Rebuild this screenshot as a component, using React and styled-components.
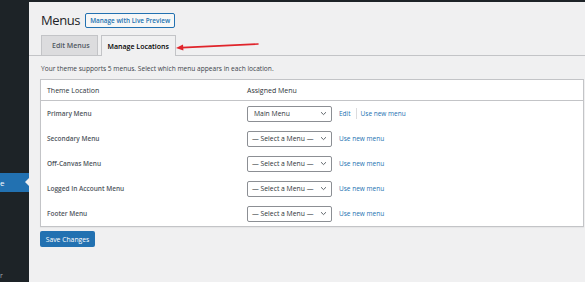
import React from 'react';
import styled, { createGlobalStyle } from 'styled-components';

const GlobalStyle = createGlobalStyle`
  html, body {
    margin: 0;
    padding: 0;
    width: 585px;
    height: 282px;
    overflow: hidden;
    background: #f0f0f1;
    font-family: "Open Sans", "Noto Sans", sans-serif;
    color: #3c434a;
  }
`;

const Page = styled.div`
  position: relative;
  width: 585px;
  height: 282px;
  display: flex;
  flex-direction: column;
`;

const AdminBar = styled.div`
  height: 2px;
  background: #1d2327;
`;

const Body = styled.div`
  flex: 1;
  display: flex;
`;

const Sidebar = styled.div`
  width: 29px;
  background: #1d2327;
  display: flex;
  flex-direction: column;
  padding-top: 171px;
  box-sizing: border-box;
`;

const SideItem = styled.div`
  position: relative;
  height: 19px;
  background: #2271b1;
  color: #fff;
  font-size: 8px;
  line-height: 19px;
  overflow: hidden;
  &::after {
    content: '';
    position: absolute;
    right: 0;
    top: 5px;
    border: 4.5px solid transparent;
    border-right-color: #f0f0f1;
  }
`;

const SideFoot = styled.div`
  margin-top: auto;
  color: #a7aaad;
  font-size: 7px;
  line-height: 10px;
  padding-bottom: 1px;
`;

const Content = styled.div`
  flex: 1;
  padding: 9px 1px 0 12px;
  display: flex;
  flex-direction: column;
`;

const TitleRow = styled.div`
  display: flex;
  align-items: center;
  gap: 5px;
  height: 18px;
`;

const Title = styled.h1`
  margin: 0;
  font-size: 13px;
  font-weight: 400;
  letter-spacing: -0.4px;
  color: #1d2327;
  line-height: 18px;
`;

const OutlineButton = styled.span`
  display: inline-flex;
  align-items: center;
  height: 15px;
  box-sizing: border-box;
  padding: 0 4px;
  border: 1px solid #2271b1;
  border-radius: 2px;
  color: #2271b1;
  font-size: 6.4px;
  font-weight: 600;
  background: #f6f7f7;
`;

const Tabs = styled.div`
  display: flex;
  gap: 3px;
  margin-top: 6px;
  margin-left: -12px;
  padding-left: 12px;
  margin-right: -1px;
  border-bottom: 1px solid #c3c4c7;
  height: 20px;
`;

const Tab = styled.div`
  display: flex;
  align-items: center;
  padding: ${p => (p.$active ? '0 6px' : '0 7px 0 10px')};
  font-size: 7px;
  font-weight: 600;
  box-sizing: border-box;
  border: 1px solid #c3c4c7;
  border-bottom: none;
  background: ${p => (p.$active ? '#f0f0f1' : '#dcdcde')};
  color: ${p => (p.$active ? '#000' : '#50575e')};
  margin-bottom: ${p => (p.$active ? '-1px' : '0')};
  height: ${p => (p.$active ? '21px' : '20px')};
`;

const Intro = styled.p`
  margin: 8px 0 0;
  font-size: 6.6px;
  line-height: 10px;
  color: #3c434a;
`;

const Table = styled.div`
  margin-top: 5px;
  margin-left: -1px;
  background: #fff;
  border: 1px solid #c3c4c7;
  box-shadow: 0 1px 1px rgba(0, 0, 0, 0.04);
`;

const HeadRow = styled.div`
  display: grid;
  grid-template-columns: 200px 1fr;
  height: 20px;
  align-items: center;
  border-bottom: 1px solid #c3c4c7;
  font-size: 7px;
  color: #2c3338;
  padding-left: 6px;
`;

const Row = styled.div`
  display: grid;
  grid-template-columns: 200px 1fr;
  height: 25px;
  align-items: center;
  padding-left: 6px;
`;

const Label = styled.div`
  font-size: 6.5px;
  font-weight: 600;
  color: #50575e;
`;

const Cell = styled.div`
  display: flex;
  align-items: center;
`;

const Select = styled.div`
  width: 85px;
  height: 16px;
  box-sizing: border-box;
  border: 1px solid #8c8f94;
  border-radius: 2px;
  display: flex;
  align-items: center;
  justify-content: space-between;
  padding: 0 4px 0 ${p => (p.$placeholder ? 4 : 6)}px;
  font-size: 6.8px;
  color: #2c3338;
  background: #fff;
`;

const Links = styled.div`
  display: flex;
  align-items: center;
  margin-left: 7px;
  font-size: 6.5px;
  color: #2271b1;
`;

const Sep = styled.span`
  width: 1px;
  height: 11px;
  background: #dcdcde;
  margin: 0 4px 0 5px;
`;

const PrimaryButton = styled.div`
  margin-top: 4px;
  margin-left: -1px;
  width: 55px;
  height: 16px;
  box-sizing: border-box;
  border-radius: 2px;
  background: #2271b1;
  color: #fff;
  font-size: 6.8px;
  display: flex;
  align-items: center;
  justify-content: center;
`;

const Annotation = styled.svg`
  position: absolute;
  left: 172px;
  top: 38px;
  overflow: visible;
`;

const Chevron = () => (
  <svg width="7" height="5" viewBox="0 0 7 5">
    <path d="M1 1.2 L3.5 3.6 L6 1.2" fill="none" stroke="#50575e" strokeWidth="0.9" />
  </svg>
);

const locations = [
  { name: 'Primary Menu', value: 'Main Menu', edit: true },
  { name: 'Secondary Menu' },
  { name: 'Off-Canvas Menu' },
  { name: 'Logged In Account Menu' },
  { name: 'Footer Menu' },
];

export default function App() {
  return (
    <>
      <GlobalStyle />
      <Page>
        <AdminBar />
        <Body>
          <Sidebar>
            <SideItem>e</SideItem>
            <SideFoot>r</SideFoot>
          </Sidebar>
          <Content>
            <TitleRow>
              <Title>Menus</Title>
              <OutlineButton>Manage with Live Preview</OutlineButton>
            </TitleRow>
            <Tabs>
              <Tab>Edit Menus</Tab>
              <Tab $active>Manage Locations</Tab>
            </Tabs>
            <Intro>Your theme supports 5 menus. Select which menu appears in each location.</Intro>
            <Table>
              <HeadRow>
                <span>Theme Location</span>
                <span>Assigned Menu</span>
              </HeadRow>
              {locations.map(loc => (
                <Row key={loc.name}>
                  <Label>{loc.name}</Label>
                  <Cell>
                    <Select $placeholder={!loc.value}>
                      <span>{loc.value || '— Select a Menu —'}</span>
                      <Chevron />
                    </Select>
                    <Links>
                      {loc.edit && (
                        <>
                          <span>Edit</span>
                          <Sep />
                        </>
                      )}
                      <span>Use new menu</span>
                    </Links>
                  </Cell>
                </Row>
              ))}
            </Table>
            <PrimaryButton>Save Changes</PrimaryButton>
          </Content>
        </Body>
        <Annotation width="90" height="16" viewBox="0 0 90 16">
          <path d="M86 6 L10 9.6" stroke="#e0242b" strokeWidth="1.6" strokeLinecap="round" fill="none" />
          <path d="M4 10 L11 6.6 L11.4 12.6 Z" fill="#e0242b" />
        </Annotation>
      </Page>
    </>
  );
}
